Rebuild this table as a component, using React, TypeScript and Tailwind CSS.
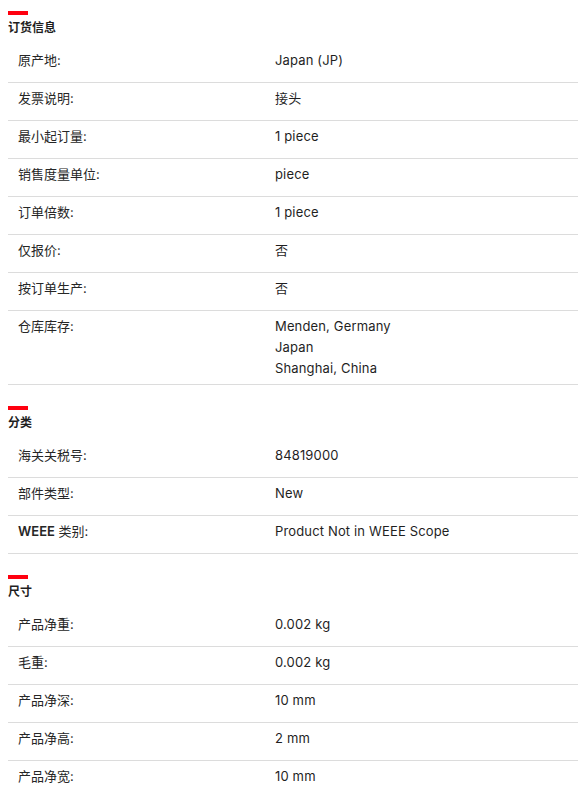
import React from "react";

type Row = { label: React.ReactNode; value: string[] };
type Section = { title: string; rows: Row[] };

const sections: Section[] = [
  {
    title: "订货信息",
    rows: [
      { label: "原产地:", value: ["Japan (JP)"] },
      { label: "发票说明:", value: ["接头"] },
      { label: "最小起订量:", value: ["1 piece"] },
      { label: "销售度量单位:", value: ["piece"] },
      { label: "订单倍数:", value: ["1 piece"] },
      { label: "仅报价:", value: ["否"] },
      { label: "按订单生产:", value: ["否"] },
      { label: "仓库库存:", value: ["Menden, Germany", "Japan", "Shanghai, China"] },
    ],
  },
  {
    title: "分类",
    rows: [
      { label: "海关关税号:", value: ["84819000"] },
      { label: "部件类型:", value: ["New"] },
      {
        label: (
          <>
            <span className="font-semibold">WEEE</span> 类别:
          </>
        ),
        value: ["Product Not in WEEE Scope"],
      },
    ],
  },
  {
    title: "尺寸",
    rows: [
      { label: "产品净重:", value: ["0.002 kg"] },
      { label: "毛重:", value: ["0.002 kg"] },
      { label: "产品净深:", value: ["10 mm"] },
      { label: "产品净高:", value: ["2 mm"] },
      { label: "产品净宽:", value: ["10 mm"] },
    ],
  },
];

export default function App() {
  return (
    <div
      className="min-h-screen bg-white pt-[11px] pl-[8px] pr-[1px] text-[#1f1f1f]"
      style={{ fontFamily: 'Inter, "Noto Sans CJK SC", sans-serif' }}
    >
      {sections.map((s, i) => (
        <div key={s.title} className={i > 0 ? "mt-[21px]" : ""}>
          <div className="h-[4px] w-[20px] bg-[#ff000f]" />
          <div className="mt-[5px] text-[12px] font-bold leading-[16px] text-[#1f1f1f]">
            {s.title}
          </div>
          <div className="mt-[9px]">
            {s.rows.map((r, j) => (
              <div
                key={j}
                className="flex min-h-[38px] border-b border-[#dcdcdc] py-[5px] text-[13px] leading-[21px]"
              >
                <div className="w-[257px] shrink-0 pl-[10px] text-[#262626]">{r.label}</div>
                <div className="pl-[10px] tracking-[0.15px]">
                  {r.value.map((v) => (
                    <div key={v}>{v}</div>
                  ))}
                </div>
              </div>
            ))}
          </div>
        </div>
      ))}
    </div>
  );
}
